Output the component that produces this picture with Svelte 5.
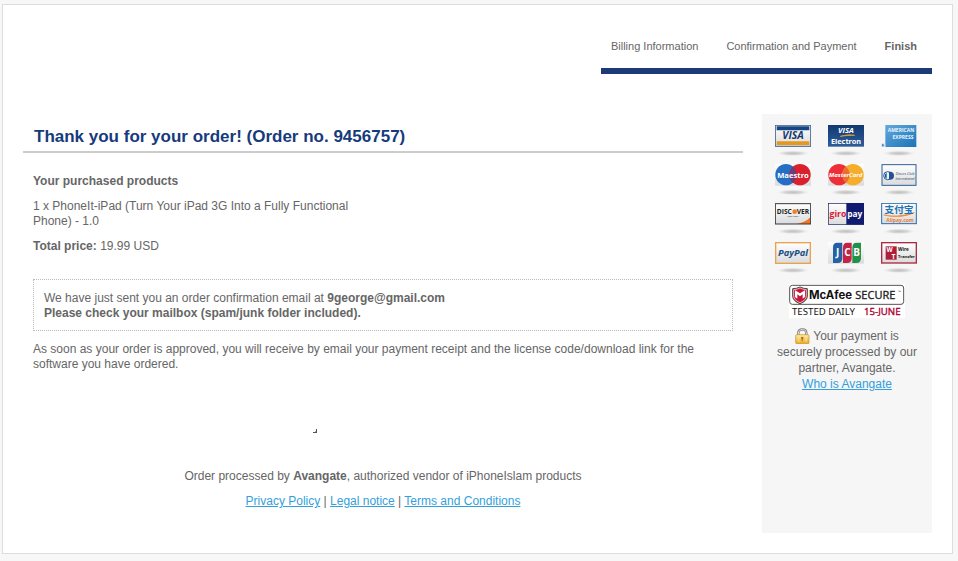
<script>
  const steps = ['Billing Information', 'Confirmation and Payment', 'Finish'];
  const methods = ['Visa', 'Visa Electron', 'American Express', 'Maestro', 'MasterCard', 'Diners Club International', 'Discover', 'giropay', 'Alipay', 'PayPal', 'JCB', 'Wire Transfer'];
</script>

<div class="card">
  <nav aria-label="Order steps">
    <ol class="steps">
      {#each steps as step, i}
        <li class:current={i === steps.length - 1}>{step}</li>
      {/each}
    </ol>
  </nav>

  <div class="columns">
    <main>
      <h1>Thank you for your order! (Order no. 9456757)</h1>
      <div class="body">
        <h2>Your purchased products</h2>
        <p class="product">1 x PhoneIt-iPad (Turn Your iPad 3G Into a Fully Functional Phone) - 1.0</p>
        <p><strong>Total price:</strong> 19.99 USD</p>
        <div class="notice">
          We have just sent you an order confirmation email at <strong>9george@gmail.com</strong><br />
          <strong>Please check your mailbox (spam/junk folder included).</strong>
        </div>
        <p>As soon as your order is approved, you will receive by email your payment receipt and the license code/download link for the software you have ordered.</p>
      </div>
      <svg class="corner" width="4" height="4" viewBox="0 0 4 4" aria-hidden="true"><path d="M3 0h1v4H0V3h3z" fill="#555" /><path d="M2 2h1v1H2z" fill="#aaa" /></svg>
      <footer>
        <p>Order processed by <strong>Avangate</strong>, authorized vendor of iPhoneIslam products</p>
        <p><a href="#privacy">Privacy Policy</a> | <a href="#legal">Legal notice</a> | <a href="#terms">Terms and Conditions</a></p>
      </footer>
    </main>

    <aside>
      <svg class="defs" width="0" height="0" aria-hidden="true">
        <defs>
          <radialGradient id="shade"><stop offset="0" stop-color="#c0c0c0" /><stop offset=".5" stop-color="#d6d6d6" /><stop offset="1" stop-color="#f6f6f6" stop-opacity="0" /></radialGradient>
          <linearGradient id="paper" x2="0" y2="1"><stop offset="0" stop-color="#fff" /><stop offset="1" stop-color="#d9dbdc" /></linearGradient>
          <linearGradient id="navy" x2="0" y2="1"><stop offset="0" stop-color="#11386f" /><stop offset="1" stop-color="#315c9b" /></linearGradient>
          <linearGradient id="amex" x2="1" y2="1"><stop offset="0" stop-color="#63a9db" /><stop offset="1" stop-color="#1b73b7" /></linearGradient>
          <linearGradient id="gold" x2="0" y2="1"><stop offset="0" stop-color="#ffe9a0" /><stop offset="1" stop-color="#eba626" /></linearGradient>
        </defs>
      </svg>
      <div class="methods">
        {#each methods as name, i}
          <svg width="36" height="34" viewBox="0 0 108 102" role="img" aria-label={name}>
            <ellipse cx="54" cy="85" rx="53" ry="9" fill="url(#shade)" />
            {#if i === 0}
              <rect x="1" y="1" width="106" height="63" fill="url(#paper)" stroke="#48658b" stroke-width="3" />
              <path d="M5 4h98v12H5z" fill="#164583" /><path d="M5 49h98v11H5z" fill="#e4981e" />
              <text x="54" y="43" font-size="31" font-weight="bold" font-style="italic" fill="#16386e">VISA</text>
            {:else if i === 1}
              <rect width="108" height="65" fill="url(#navy)" />
              <text x="54" y="25" font-size="23" font-weight="bold" font-style="italic" fill="#fff">VISA</text>
              <path d="M37 34q24-8 43-3-22-1-43 3" fill="#ecae37" stroke="#ecae37" stroke-width="2" />
              <text class="wide" x="54" y="58" font-size="22" font-weight="bold" fill="#fff">Electron</text>
            {:else if i === 2}
              <rect x="13" width="93" height="66" fill="url(#amex)" />
              <path d="M1 55h12v11H1z" fill="#cce2f0" /><path d="M3 58h5v6H3z" fill="#397db1" />
              <text x="60" y="20" font-size="15" font-weight="bold" fill="#e8f5ff">AMERICAN</text><text x="66" y="42" font-size="15" font-weight="bold" fill="#e8f5ff">EXPRESS</text>
            {:else if i === 3}
              <rect width="108" height="65" fill="url(#paper)" />
              <circle cx="33" cy="32" r="32" fill="#246fc3" /><circle cx="75" cy="32" r="32" fill="#d9202c" />
              <path d="M54 8a32 32 0 0 1 0 48 32 32 0 0 1 0-48" fill="#703a7b" />
              <text x="54" y="41" font-size="23" font-weight="bold" fill="#fff">Maestro</text>
            {:else if i === 4}
              <rect width="108" height="65" fill="url(#paper)" />
              <circle cx="33" cy="32" r="32" fill="#ed3037" /><circle cx="75" cy="32" r="32" fill="#f5ae2c" />
              <path d="M54 8a32 32 0 0 1 0 48 32 32 0 0 1 0-48" fill="#ed6c31" />
              <text x="53" y="40" font-size="18" font-weight="bold" font-style="italic" fill="#fff">MasterCard</text>
            {:else if i === 5}
              <rect x="3" y="2" width="102" height="62" fill="url(#paper)" stroke="#315f94" stroke-width="3" />
              <circle cx="20" cy="35" r="12" fill="#edf4fb" stroke="#23589c" stroke-width="3" />
              <path d="M24 23h3a12 12 0 0 1 0 24h-3zM17 26v18a10 10 0 0 1 0-18" fill="#244f92" />
              <text x="72" y="32" font-size="11" font-style="italic" fill="#31455c">Diners Club</text><text x="72" y="47" font-size="10" font-style="italic" fill="#31455c">International</text>
            {:else if i === 6}
              <rect x="1" y="2" width="106" height="61" fill="url(#paper)" />
              <path d="M106 43v20H63q29-5 43-20" fill="#f17323" />
              <rect x="1" y="2" width="106" height="61" fill="none" stroke="#35383b" stroke-width="3" />
              <text x="28" y="33" font-size="20" font-weight="bold" fill="#222">DISC</text><circle cx="59" cy="26" r="7" fill="#f18127" /><text x="84" y="33" font-size="20" font-weight="bold" fill="#222">VER</text>
              <text x="54" y="43" font-size="7" fill="#222">NETWORK</text>
            {:else if i === 7}
              <rect x="1" y="1" width="106" height="63" fill="url(#paper)" stroke="#101958" stroke-width="2" /><path d="M55 0h53v65H55z" fill="#101b70" />
              <text x="30" y="41" font-size="26" font-weight="bold" fill="#dd1735">giro</text><text x="80" y="41" font-size="25" font-weight="bold" fill="#fff">pay</text>
            {:else if i === 8}
              <rect x="2" y="1" width="104" height="61" fill="url(#paper)" stroke="#2b6cae" stroke-width="3" />
              <path d="M8 36q35 9 92-7-40 19-92 7" fill="#f08b2c" stroke="#f08b2c" stroke-width="2" />
              <text class="cjk" x="54" y="31" font-size="29" font-weight="bold" fill="#2171b5">支付宝</text>
              <text x="57" y="56" font-size="15" font-weight="bold" fill="#e87b33">Alipay.com</text>
            {:else if i === 9}
              <rect x="2" y="2" width="104" height="62" fill="url(#paper)" stroke="#e9a34f" stroke-width="4" />
              <text x="54" y="43" font-size="28" font-weight="bold" font-style="italic" fill="#1b4e82">PayPal</text>
            {:else if i === 10}
              <rect width="108" height="65" fill="url(#paper)" />
              <path d="M27 2h16v47q0 14-14 14H15V16Q15 2 27 2" fill="#2460a4" /><path d="M57 2h14v47q0 14-14 14H45V16Q45 2 57 2" fill="#c52345" /><path d="M85 2h14v47q0 14-14 14H73V16Q73 2 85 2" fill="#249149" />
              <text x="29" y="43" font-size="30" font-weight="bold" fill="#fff">J</text><text x="58" y="43" font-size="30" font-weight="bold" fill="#fff">C</text><text x="86" y="43" font-size="30" font-weight="bold" fill="#fff">B</text>
            {:else}
              <rect x="2" y="2" width="104" height="61" fill="url(#paper)" stroke="#af2941" stroke-width="4" /><path d="M14 13h33v40H14z" fill="#af1e39" />
              <text x="26" y="30" font-size="19" font-weight="bold" fill="#fff">W</text><text x="37" y="51" font-size="20" font-weight="bold" fill="#fff">T</text>
              <text class="start" x="51" y="28" font-size="14" font-weight="bold" fill="#111">Wire</text><text class="start" x="51" y="49" font-size="12" font-weight="bold" fill="#111">Transfer</text>
            {/if}
          </svg>
        {/each}
      </div>

      <svg class="mcafee" width="116" height="36" viewBox="0 0 348 108" role="img" aria-label="McAfee Secure, tested daily, 15-June">
        <path d="M0 0h348v102H0z" fill="#fff" />
        <rect x="2" y="4" width="342" height="57" rx="8" fill="#fff" stroke="#555" stroke-width="3" />
        <path d="M11 14q12 0 22-5 10 5 22 5v22q0 15-22 23Q11 51 11 36z" fill="#c51638" stroke="#4b4b4b" stroke-width="3" />
        <path d="M14 17q10 0 19-5 9 5 19 5v19q0 12-19 20-19-8-19-20z" fill="none" stroke="#fff" stroke-width="2" />
        <path d="M18 19l15 9 15-9v20l-7 5V31l-8 6-8-6v13l-7-5z" fill="#fff" />
        <text class="start inter" x="60" y="44" font-size="34" font-weight="bold" fill="#111">McAfee</text>
        <text class="start light" x="199" y="45" font-size="33" fill="#222" stroke="#222">SECURE</text><text class="start" x="328" y="28" font-size="10" fill="#222">™</text>
        <text class="start wide" x="9" y="94" font-size="29" fill="#111">TESTED DAILY</text>
        <text class="start wide" x="225" y="94" font-size="29" fill="#b00032" stroke="#b00032">15-JUNE</text>
      </svg>

      <p>
        <svg class="lock" width="15" height="16" viewBox="0 0 45 48" aria-hidden="true">
          <path d="M10 23V15q0-11 12-11t12 11v8" fill="none" stroke="#777" stroke-width="7" /><path d="M10 23V15q0-11 12-11t12 11v8" fill="none" stroke="#ddd" stroke-width="3" />
          <rect x="2" y="20" width="40" height="27" rx="3" fill="url(#gold)" stroke="#ca922c" stroke-width="2" /><path d="M8 27h6m-6 6h6m-6 6h6m16-12h6m-6 6h6m-6 6h6" stroke="#fff3bd" stroke-width="2" /><path d="M19 27h6v5h-2v7h-3v-7h-2z" fill="#9b6b18" />
        </svg>
        Your payment is securely processed by our partner, Avangate.<br /><a href="#avangate">Who is Avangate</a>
      </p>
    </aside>
  </div>
</div>

<style>
  :global(body) { margin: 0; background: #f7f7f7; }
  .card {
    margin: 4px 5px 7px 2px;
    padding: 28px 20px 20px;
    border: 1px solid #ddd;
    background: #fff;
    color: #666;
    font: 12px/15px "Liberation Sans", Arial, sans-serif;
  }
  h1, h2, p, ol { margin: 0; padding: 0; }
  nav { display: flex; justify-content: flex-end; }
  .steps {
    display: flex;
    gap: 28px;
    padding: 6px 15px 14px 10px;
    border-bottom: 6px solid #1b3a77;
    list-style: none;
    font-size: 11px;
  }
  .current { font-weight: bold; }
  .columns { display: flex; gap: 19px; margin-top: 40px; }
  main { flex: 1; min-width: 0; }
  h1 {
    padding: 13px 11px 4px;
    border-bottom: 2px solid #ccc;
    color: #163b7c;
    font-size: 17px;
    line-height: 20px;
  }
  .body { display: flex; flex-direction: column; gap: 10px; padding: 21px 10px 0; }
  h2 { font-size: 12px; line-height: 15px; }
  .product { max-width: 330px; }
  .notice { margin: 15px 0 1px; padding: 11px 10px 9px; border: 1px dotted #bbb; }
  .corner { display: block; margin: 57px 0 36px 290px; }
  footer { display: flex; flex-direction: column; gap: 10px; text-align: center; }
  a { color: #339fdc; text-decoration: underline; }
  aside {
    box-sizing: border-box;
    width: 170px;
    min-height: 419px;
    padding: 11px 0 20px;
    background: #f6f6f6;
    text-align: center;
    line-height: 16px;
  }
  aside p { padding: 0 10px; }
  .defs { position: absolute; }
  .methods {
    display: grid;
    grid-template-columns: repeat(3, 36px);
    justify-content: space-between;
    row-gap: 5px;
    padding: 0 15px 0 13px;
  }
  .methods svg, .mcafee { display: block; overflow: hidden; }
  .mcafee { margin: 8px auto; }
  .lock { vertical-align: -4px; }
  text { text-anchor: middle; font-family: "Open Sans", "Noto Sans", sans-serif; }
  .start { text-anchor: start; }
  .wide { font-family: "Noto Sans", sans-serif; }
  .inter { font-family: Inter, sans-serif; }
  .light { font-family: "Open Sans", sans-serif; }
  .cjk { font-family: "Noto Sans CJK SC", sans-serif; }
</style>
